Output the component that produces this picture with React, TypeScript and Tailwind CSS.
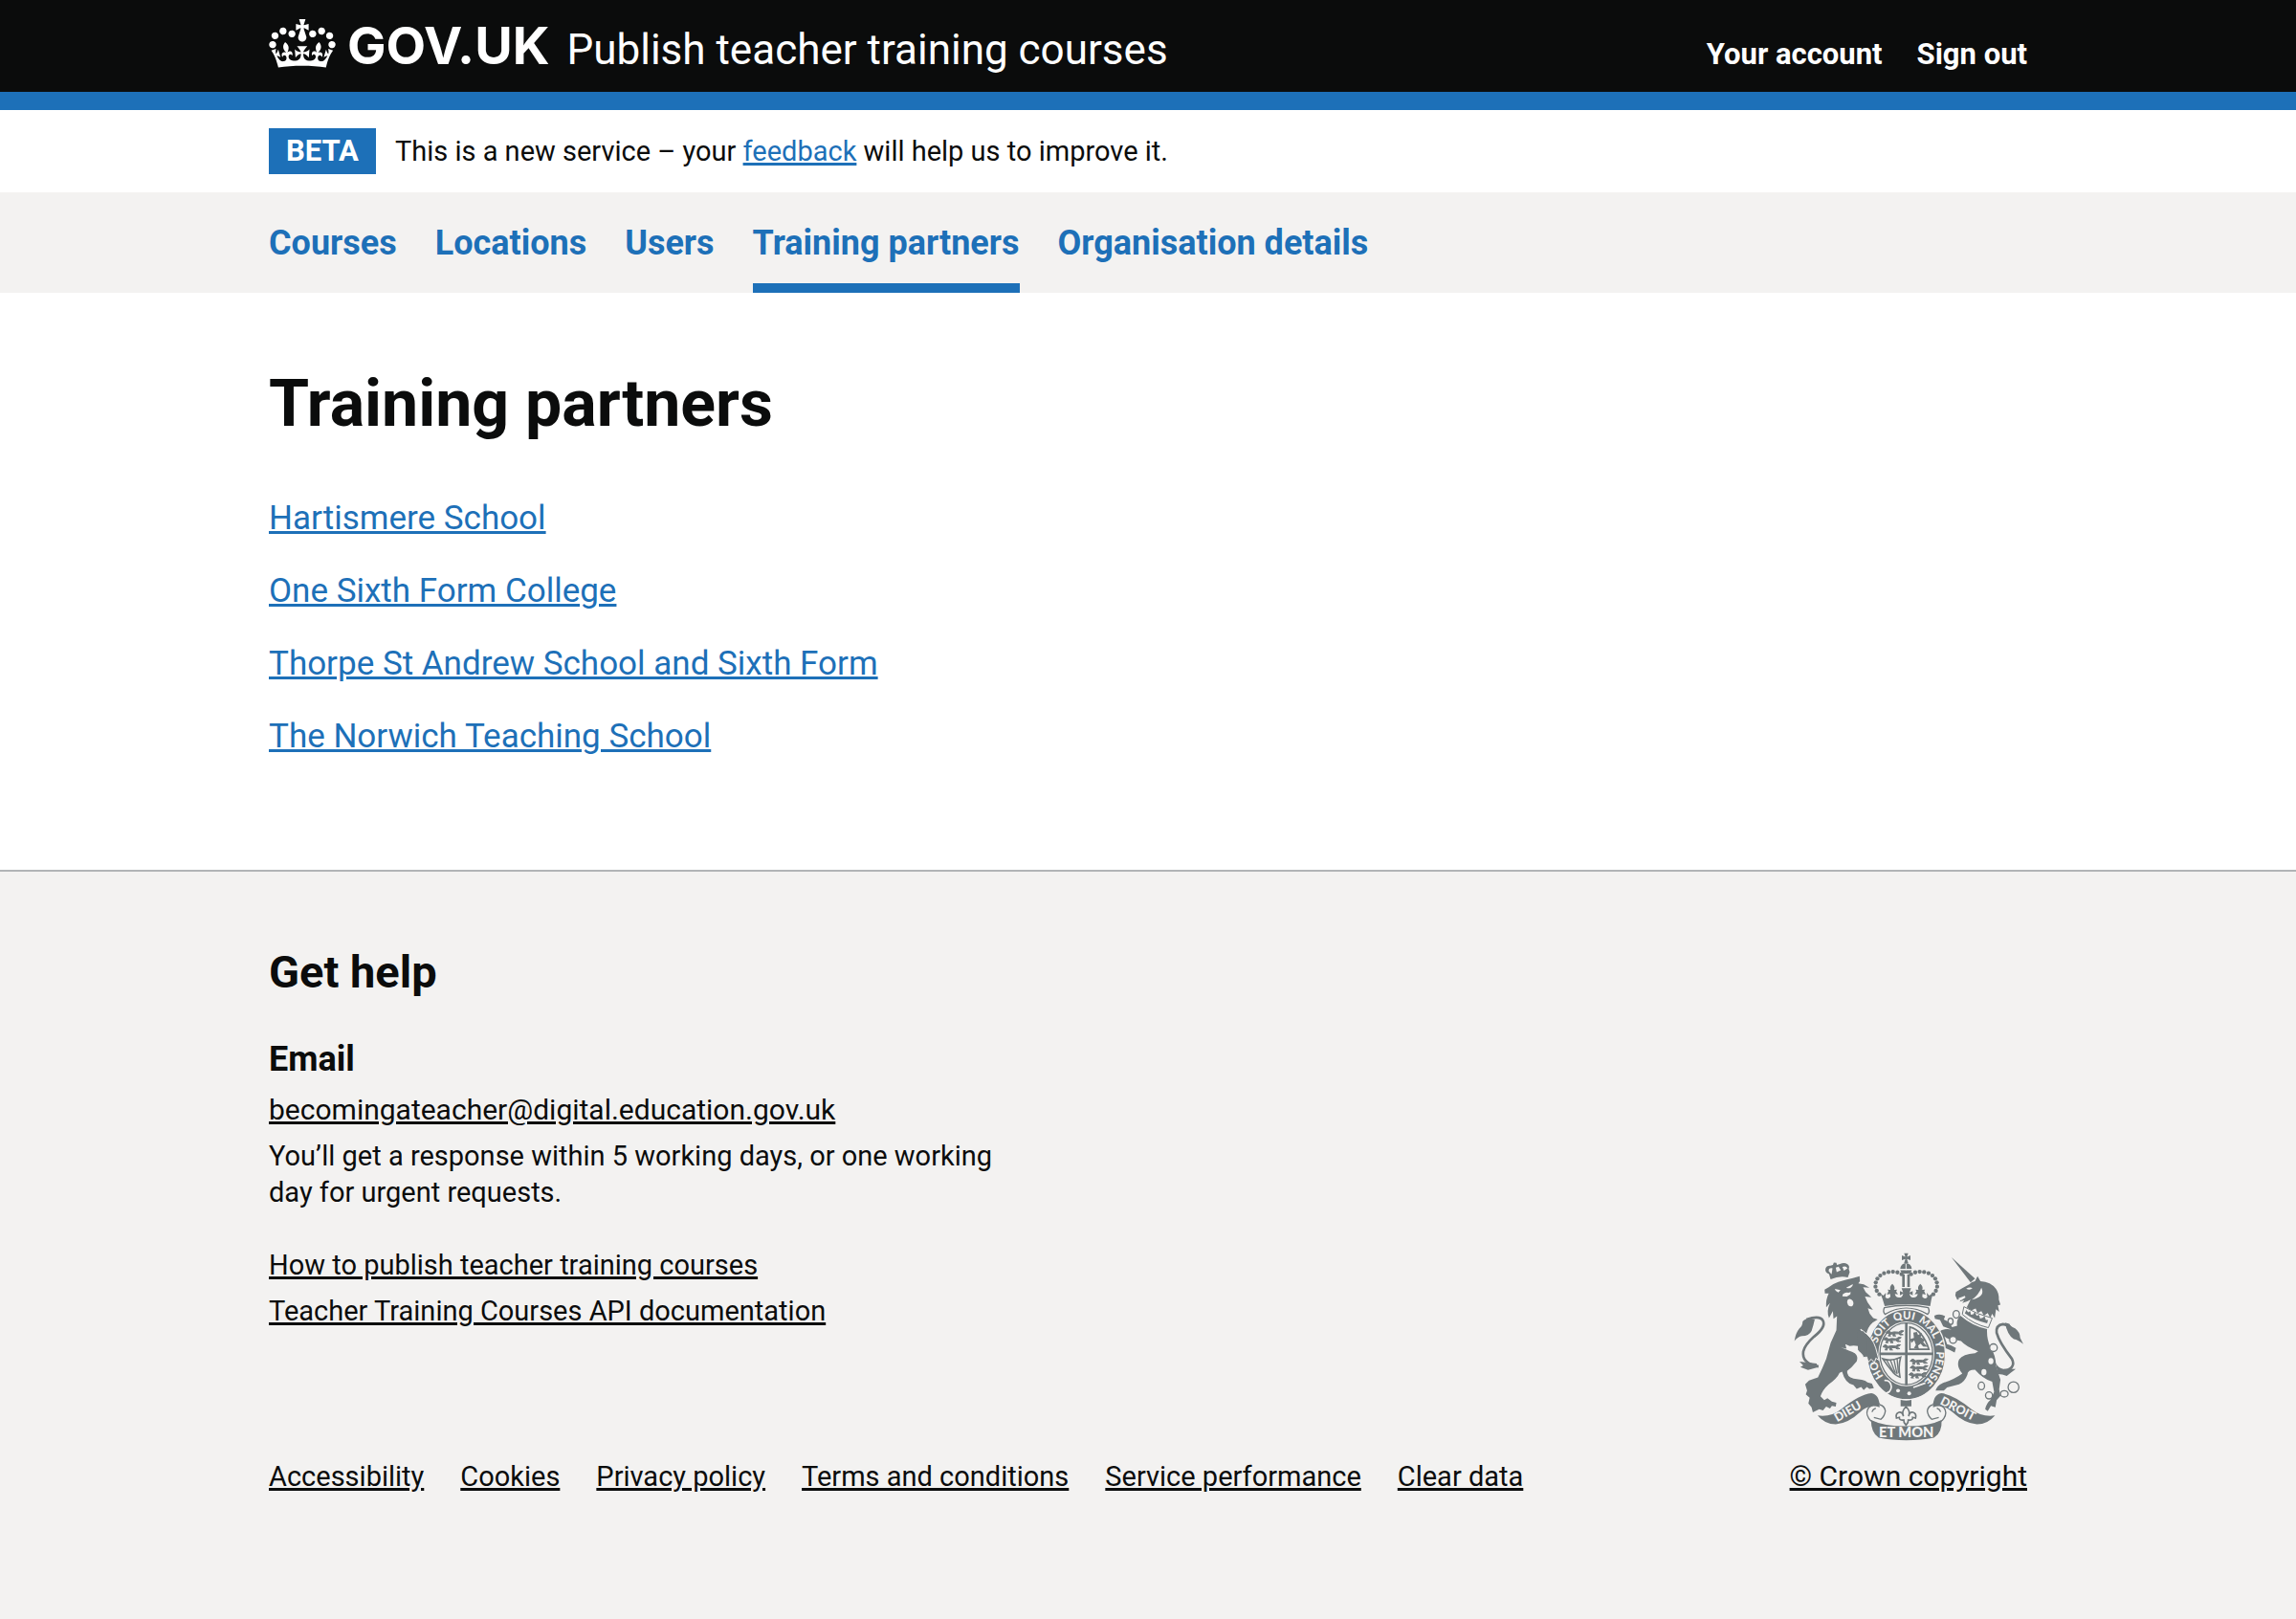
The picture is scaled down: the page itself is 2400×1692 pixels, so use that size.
import type { ReactNode } from "react";

const navItems = [
  { label: "Courses", current: false },
  { label: "Locations", current: false },
  { label: "Users", current: false },
  { label: "Training partners", current: true },
  { label: "Organisation details", current: false },
];

const partners = [
  "Hartismere School",
  "One Sixth Form College",
  "Thorpe St Andrew School and Sixth Form",
  "The Norwich Teaching School",
];

const footerLinks = [
  "Accessibility",
  "Cookies",
  "Privacy policy",
  "Terms and conditions",
  "Service performance",
  "Clear data",
];

function Container({ className = "", children }: { className?: string; children: ReactNode }) {
  return <div className={`mx-auto w-full max-w-[1838px] ${className}`}>{children}</div>;
}

function CrownLogo() {
  return (
    <svg viewBox="0 0 132 97" className="h-[51px] w-[70px] shrink-0" fill="currentColor" aria-hidden="true">
      <path d="M25 30.2c3.5 1.5 7.7-.2 9.1-3.7 1.5-3.6-.2-7.8-3.9-9.2-3.6-1.4-7.6.3-9.1 3.9-1.4 3.5.3 7.5 3.9 9zM9 39.5c3.6 1.5 7.8-.2 9.2-3.7 1.5-3.6-.2-7.8-3.9-9.1-3.6-1.5-7.6.2-9.1 3.8-1.4 3.5.3 7.5 3.8 9zM4.4 57.2c3.5 1.5 7.7-.2 9.1-3.8 1.5-3.6-.2-7.7-3.9-9.1-3.5-1.5-7.6.3-9.1 3.8-1.4 3.5.3 7.6 3.9 9.1zm38.3-21.4c3.5 1.5 7.7-.2 9.1-3.8 1.5-3.6-.2-7.7-3.9-9.1-3.6-1.5-7.6.3-9.1 3.8-1.3 3.6.4 7.7 3.9 9.1zm64.4-5.6c-3.6 1.5-7.8-.2-9.1-3.7-1.5-3.6.2-7.8 3.8-9.2 3.6-1.4 7.7.3 9.2 3.9 1.3 3.5-.4 7.5-3.9 9zm15.9 9.3c-3.6 1.5-7.7-.2-9.1-3.7-1.5-3.6.2-7.8 3.7-9.1 3.6-1.5 7.7.2 9.2 3.8 1.5 3.5-.3 7.5-3.8 9zm4.7 17.7c-3.6 1.5-7.8-.2-9.2-3.8-1.5-3.6.2-7.7 3.9-9.1 3.6-1.5 7.7.3 9.2 3.8 1.3 3.5-.4 7.6-3.9 9.1zM89.3 35.8c-3.6 1.5-7.8-.2-9.2-3.8-1.4-3.6.2-7.7 3.9-9.1 3.6-1.5 7.7.3 9.2 3.8 1.4 3.6-.3 7.7-3.9 9.1zM69.7 17.7l8.9 4.7V9.3l-8.9 2.8c-.2-.3-.5-.6-.9-.9L72.4 0H59.6l3.5 11.2c-.3.3-.6.5-.9.9l-8.8-2.8v13.1l8.8-4.7c.3.3.6.7.9.9l-5 15.4v.1c-.2.8-.4 1.6-.4 2.4 0 4.1 3.1 7.5 7 8.1h.2c.3 0 .7.1 1 .1.4 0 .7 0 1-.1h.2c4-.6 7.1-4.1 7.1-8.1 0-.8-.1-1.7-.4-2.4V34l-5.1-15.4c.4-.2.7-.6 1-.9zM66 92.8c16.9 0 32.8 1.1 47.1 3.2 4-16.9 8.9-26.7 14-33.5l-9.6-3.4c1 4.9 1.1 7.2 0 10.2-1.5-1.4-3-4.3-4.2-8.7L108.6 76c2.8-2 5-3.2 7.5-3.3-4.4 9.4-10 11.9-13.6 11.2-4.3-.8-6.3-4.6-5.6-7.9 1-4.7 5.7-5.9 8-.5 4.3-8.7-3-11.4-7.6-8.8 7.1-7.2 7.9-13.5 2.1-21.1-8 6.1-8.1 12.3-4.5 20.8-4.7-5.4-12.1-2.5-9.5 6.2 3.4-5.2 7.9-2 7.2 3.1-.6 4.3-6.4 7.8-13.5 7.2-10.3-.9-10.9-8-11.2-13.8 2.5-.5 7.1 1.8 11 7.3L80.2 60c-4.1 4.4-8 5.3-12.3 5.4 1.4-4.4 8-11.6 8-11.6H55.5s6.4 7.2 7.9 11.6c-4.2-.1-8-1-12.3-5.4l1.4 16.4c3.9-5.5 8.5-7.7 10.9-7.3-.3 5.8-.9 12.8-11.1 13.8-7.2.6-12.9-2.9-13.5-7.2-.7-5 3.8-8.3 7.1-3.1 2.7-8.7-4.6-11.6-9.4-6.2 3.7-8.5 3.6-14.7-4.6-20.8-5.8 7.6-5 13.9 2.2 21.1-4.7-2.6-11.9.1-7.7 8.8 2.3-5.5 7.1-4.2 8.1.5.7 3.3-1.3 7.1-5.7 7.9-3.5.7-9-1.8-13.5-11.2 2.5.1 4.7 1.3 7.5 3.3l-4.7-15.4c-1.2 4.4-2.7 7.2-4.3 8.7-1.1-3-.9-5.3 0-10.2l-9.5 3.4c5 6.9 9.9 16.7 14 33.5 14.8-2.1 30.8-3.2 47.1-3.2z" />
    </svg>
  );
}

// Beads along the two arches of the royal crown.
const beads: [number, number][] = [
  [409, 124], [396, 118], [382, 116], [368, 117], [354, 121], [342, 128], [333, 138], [328, 150],
  [327, 163], [331, 176], [339, 187],
];

// One passant lion of the quartered field, drawn in a 60 by 18 box.
const passant =
  "M2 9l6-6 6 1 4 4 10-2 14 1 8-5 8 1-3 3-8 3 4 4 5 2-9 1-6-4-10 0-2 4 4 3-9 0 1-6-6 0-5 4 3 2-8 0 4-7z";

function RoyalArms() {
  return (
    <svg viewBox="70 56 722 592" className="h-[197px] w-60" fill="#6f777a" aria-hidden="true">
      {/* Orb, cross and crown */}
      <path d="M417 58h13l-4 11 11-4v15l-11-4 4 13h-13l4-13-11 4V65l11 4z" />
      <path d="M405 107a18 18 0 0 1 36 0zM405 111h36q-2 9-12 11h-12q-10-2-12-11z" />
      <path d="M423 91v20" stroke="#f3f2f1" strokeWidth="3" />
      <path d="M411 124h8v40h-8zM427 124h8v40h-8z" />
      {beads.map(([x, y]) => (
        <g key={y * 1000 + x}>
          <circle cx={x} cy={y} r="6.5" />
          <circle cx={848 - x} cy={y} r="6.5" />
        </g>
      ))}
      <path d="M340 183l12 8 8-9-2 14q8 8 16-1l-1-9-10 2 5-11-3-5 9 1q-4-11 6-19 10 8 6 19l9-1-3 6 6 9-10-1q2 14 20 10 5-2 6-11l-10 5v-13l10 4-5-13h30l-5 13 10-4v13l-10-5q1 9 6 11 18 4 20-10l-10 1 6-9-3-6 9 1q-4-11 6-19 10 8 6 19l9-1-3 5 5 11-10-2-1 9q8 9 16 1l-2-14 8 9 12-8q-6 20-9 41-70-12-143 0-6-22-14-41z" />
      <path d="M355 229q69-14 138 0 6 14-2 21-67-38-134 0-8-9-2-21z" fill="#f3f2f1" stroke="#6f777a" strokeWidth="4" />

      {/* Lion supporter */}
      <path d="M186 140l-5-17q-14-5-11-17 3-10 15-9l8-2 3-8 8 1 2 7 9-3q14-6 23 0 9 6 5 15l3 10-6 17q-26-6-54 6z" />
      <path d="M189 124l-9-10q-1-11 12-9zM205 117l-3-14 9-3 7 11zM228 113l-5-12q12-4 16 4z" fill="#f3f2f1" />
      <path d="M167 172L180 165Q192 154 210 148Q235 140 256 136L277 130L278 146L273 153L290 156L308 166L288 165L296 180L314 196L294 194L302 212L319 236L303 231L309 248L320 262L334 266L318 276Q300 292 298 316Q318 330 326 356L336 392L328 388L324 400L316 391L305 398L302 384L290 386L290 370L276 366L272 350Q258 346 246 350L232 344L236 358L218 354Q246 364 262 372Q274 382 268 398Q252 418 238 428Q236 446 258 452L284 456Q296 458 302 464L316 468L322 482L308 484L300 478L290 488L282 478L268 484L258 472Q232 468 222 430L214 434Q206 452 180 470Q160 488 154 508L166 520L176 514L190 524L204 528L202 540L190 538L184 546L172 540L162 552L150 548L130 558L126 542L116 530L120 512L108 502L112 490L106 470L118 458Q134 452 146 448Q160 420 172 390L186 340L204 300L206 256L195 264L193 240L181 262Q172 240 184 214L172 228Q170 204 180 184L168 184Z" />
      <path d="M199 170l18 4-7 7q-9-2-11-11zM235 166l21-11q0 8-7 11-7 3-14 0zM224 187q9-8 18-5l7-2-1 7-11 7-14-1zM239 205q8-7 16 2 6 10-1 17-7 3-13-3-6-8-2-16z" fill="#f3f2f1" />
      <path d="M280 297q28 20 44 50" fill="none" stroke="#f3f2f1" strokeWidth="4" />
      <path d="M148 414q-54-10-48-47 4-20 34-47 38-30 28-50-9-18-52-4" fill="none" stroke="#6f777a" strokeWidth="8" />
      <path d="M136 266Q110 258 98 272Q98 286 88 294Q76 308 72 334Q82 320 96 318Q118 318 126 302Q132 284 136 266zM142 405l-26-3-28-3 12 12-9 5 24 9 30-8z" />

      {/* Unicorn supporter */}
      <path d="M566 71L640 138L626 150Z" />
      <path d="M622 156L630 149L640 146L648 130L657 146Q690 148 706 170Q716 184 715 204L720 220L712 222L716 242L706 234L702 262L694 248L688 262L680 246L668 254L660 240L648 246L642 232L628 238L614 228L626 204Q614 212 600 214L606 206L592 210L596 202L584 204L578 190L580 180L600 168Z" />
      <path d="M612 169q12-6 20-1-8 8-20 1zM586 200l22-8 2 5-14 9zM660 166q14 28-30 38 22-16 30-38z" fill="#f3f2f1" />
      <path d="M594 254Q634 288 678 296Q676 326 688 352Q706 380 706 412L720 456L716 486L720 506L708 520L704 542L690 538L680 554L672 548Q676 530 688 520L700 494L694 462Q664 452 640 424Q616 424 616 440Q608 462 590 470L552 480L542 490L516 490Q520 474 538 466Q572 456 600 436Q580 412 590 392Q602 374 640 372L650 366Q612 352 596 334L578 330Q558 332 544 320L552 344L566 348L580 356L576 370L560 362L546 356L540 338L524 306Q544 292 566 298L540 288L530 268L514 264L512 254Q530 246 546 256L542 266Q562 274 568 290L584 286Q580 268 594 254Z" />
      <path d="M605 226Q650 252 694 262L682 292Q636 282 600 250Z" fill="#f3f2f1" stroke="#6f777a" strokeWidth="3" />
      <path d="M608 247l5-11 5 8 7-4 2 11 8-1 4-8 6 12 8-2 3 11 8-2 6-5 4 12 7 0-3 10q-40-8-70-31z" />
      <path d="M722 430q50-8 34-40-40-52-48-82-3-24 20-27 28 2 38 38" fill="none" stroke="#6f777a" strokeWidth="8" />
      <path d="M734 276L748 280Q752 290 766 294Q782 306 782 324L792 344Q776 330 762 328Q742 316 734 276zM704 402q13 23 30 19l34 1-16 12-12 10-14-5-14-1z" />
      <g fill="none" stroke="#6f777a" strokeWidth="4">
        <circle cx="761" cy="479" r="17" />
        <ellipse cx="732" cy="500" rx="12" ry="10" />
        <circle cx="684" cy="505" r="11" fill="#f3f2f1" />
        <ellipse cx="660" cy="475" rx="10" ry="12" />
        <ellipse cx="581" cy="250" rx="10" ry="12" />
        <ellipse cx="563" cy="272" rx="8" ry="10" />
      </g>
      <g fill="#f3f2f1">
        <ellipse cx="668" cy="432" rx="8" ry="10" />
        <ellipse cx="690" cy="397" rx="8" ry="10" />
        <circle cx="698" cy="355" r="12" stroke="#6f777a" strokeWidth="4" />
        <circle cx="571" cy="330" r="11" stroke="#6f777a" strokeWidth="4" />
      </g>

      {/* Garter */}
      <ellipse cx="424" cy="376" rx="123" ry="142" stroke="#f3f2f1" strokeWidth="4" />
      <ellipse cx="424" cy="374" rx="88" ry="102" fill="#f3f2f1" />
      <ellipse cx="424" cy="374" rx="83" ry="97" fill="#f3f2f1" stroke="#6f777a" strokeWidth="4" />
      <path id="garter" d="M424 482A95 109 0 0 1 329 374A95 109 0 0 1 424 265A95 109 0 0 1 519 374A95 109 0 0 1 424 482" fill="none" />
      <g fill="#f3f2f1" className="text-[34px] font-black" fontFamily="Lato">
        <text><textPath href="#garter" startOffset="13%">HO</textPath></text>
        <text><textPath href="#garter" startOffset="30%">SOIT</textPath></text>
        <text><textPath href="#garter" startOffset="44%">QUI</textPath></text>
        <text><textPath href="#garter" startOffset="56%">MAL</textPath></text>
        <text><textPath href="#garter" startOffset="69%">Y</textPath></text>
        <text><textPath href="#garter" startOffset="74%">PENSE</textPath></text>
      </g>
      <path d="M355 458q20-2 22 20-2 18-18 20M446 480l38-14" fill="none" stroke="#f3f2f1" strokeWidth="5" />
      <circle cx="398" cy="490" r="6" fill="#f3f2f1" />
      <circle cx="433" cy="499" r="6" fill="#f3f2f1" />
      <path d="M284 300Q318 322 328 356L338 394L328 388L324 402L314 391L304 400L300 384L288 386L284 366Z" stroke="#f3f2f1" strokeWidth="3" />
      <path d="M270 300L290 304L300 330L300 382L288 378L272 362Z" />

      {/* Quartered shield */}
      <path d="M420 276h8v196h-8zM340 370h168v8H340z" />
      {[
        [358, 299], [350, 320], [348, 343],
        [434, 388], [434, 409], [430, 431],
      ].map(([x, y]) => (
        <path key={`${x}-${y}`} d={passant} transform={`translate(${x} ${y})`} stroke="#6f777a" strokeWidth="3" />
      ))}
      <path d="M435 290q40 9 60 70h-60z" fill="none" stroke="#6f777a" strokeWidth="5" />
      <path d="M446 308l11-3 4 10 12-7-4 14 14 8-6 8 14 14-14-1-8-9-8 6 3 12-16-4 6-10-5-14-9 8-4-12 12-4z" />
      <path d="M350 390q26 9 56-5-8 30-2 62-16-4-26-20-14-16-28-37z" fill="none" stroke="#6f777a" strokeWidth="5" />
      <path d="M362 394l22 38M374 394l16 42M385 392l10 46M395 390l4 44" fill="none" stroke="#6f777a" strokeWidth="4" />

      {/* Fleur-de-lis and motto ribbon */}
      <path d="M406 519q18 4 34 0v20h-34z" />
      <path
        d="M423 540q-16 16-8 30-4-14-14-12-12 4-8 18l9-2q-1 10 14 8l1 8 6 8 6-8 1-8q15 2 14-8l9 2q4-14-8-18-10-2-14 12 8-14-8-30z"
        fill="#f3f2f1"
        stroke="#6f777a"
        strokeWidth="5"
      />
      {[undefined, "translate(848 0) scale(-1 1)"].map((t) => (
        <g key={t ?? "left"} transform={t}>
          <path d="M145 568q42 6 74-20 58-46 95-50 26 4 26 44-34-12-62 16-36 34-76 38-34 0-57-28z" />
          <path
            d="M340 531q-20 0-34 12-12 16 0 34 8 12 26 16M340 534q16 4 18 20-2 16-14 26l-22-6M328 545q-10 4-12 12"
            fill="none"
            stroke="#6f777a"
            strokeWidth="4"
          />
        </g>
      ))}
      <path d="M313 582q40 20 111 20t111-20q2 40-24 56-40 8-87 8t-87-8q-24-16-24-56z" />
      <g fill="#f3f2f1" className="font-black" fontFamily="Lato">
        <text x="424" y="636" textAnchor="middle" className="text-[44px]">ET MON</text>
        <text transform="translate(207 589) rotate(-30)" className="text-[38px]">DIEU</text>
        <text transform="translate(528 531) rotate(27)" className="text-[38px]">DROIT</text>
      </g>
    </svg>
  );
}

const plainLink = "underline decoration-[3px] underline-offset-2";

export default function App() {
  return (
    <div className="flex min-h-screen flex-col bg-white font-['Roboto',sans-serif] text-[#0b0c0c]">
      <header className="border-b-[19px] border-[#1d70b8] bg-[#0b0c0c] text-white">
        <Container className="flex h-24 items-baseline pt-5">
          <a href="#" aria-label="GOV.UK" className="flex gap-3">
            <CrownLogo />
            <span className="self-baseline font-['Inter',sans-serif] text-[54px] leading-[56px] font-bold">GOV.UK</span>
          </a>
          <a href="#" className="ml-[18px] text-[44px] leading-[56px]">
            Publish teacher training courses
          </a>
          <nav aria-label="Account" className="ml-auto flex gap-9 text-[31px] leading-[38px] font-bold">
            <a href="#">Your account</a>
            <a href="#">Sign out</a>
          </nav>
        </Container>
      </header>

      <Container className="flex items-baseline gap-5 py-[19px]">
        <strong className="bg-[#1d70b8] px-[18px] text-[31px] leading-[48px] font-bold text-white">BETA</strong>
        <p className="text-[29px] leading-[38px]">
          This is a new service – your{" "}
          <a href="#" className={`${plainLink} text-[#1d70b8]`}>
            feedback
          </a>{" "}
          will help us to improve it.
        </p>
      </Container>

      <nav aria-label="Primary" className="bg-[#f3f2f1]">
        <Container>
          <ul className="flex gap-10 text-[36px] leading-[48px] font-bold text-[#1d70b8]">
            {navItems.map(({ label, current }) => (
              <li key={label}>
                <a
                  href="#"
                  aria-current={current ? "page" : undefined}
                  className={`block border-b-10 pt-[29px] pb-[18px] ${current ? "border-[#1d70b8]" : "border-transparent"}`}
                >
                  {label}
                </a>
              </li>
            ))}
          </ul>
        </Container>
      </nav>

      <main>
        <Container className="pt-[68px] pb-[115px]">
          <h1 className="mb-12 text-[68px] leading-[96px] font-bold">Training partners</h1>
          <ul className="flex flex-col gap-7 text-[35px] leading-[48px] text-[#1d70b8]">
            {partners.map((name) => (
              <li key={name}>
                <a href="#" className={plainLink}>
                  {name}
                </a>
              </li>
            ))}
          </ul>
        </Container>
      </main>

      <footer className="grow border-t-2 border-[#b1b4b6] bg-[#f3f2f1] text-[29px] leading-[38px]">
        <Container className="flex items-end justify-between pt-[76px] pb-24">
          <div>
            <h2 className="mb-[38px] text-[47px] leading-[58px] font-bold">Get help</h2>
            <h3 className="mb-2.5 text-[36px] leading-[48px] font-bold">Email</h3>
            <ul className="mb-[38px] flex max-w-[800px] flex-col gap-2.5">
              <li>
                <a href="#" className={`${plainLink} text-[30px]`}>
                  becomingateacher@digital.education.gov.uk
                </a>
              </li>
              <li>You’ll get a response within 5 working days, or one working day for urgent requests.</li>
            </ul>
            <ul className="mb-[135px] flex flex-col gap-2.5">
              <li>
                <a href="#" className={plainLink}>
                  How to publish teacher training courses
                </a>
              </li>
              <li>
                <a href="#" className={plainLink}>
                  Teacher Training Courses API documentation
                </a>
              </li>
            </ul>
            <ul className="flex flex-wrap gap-x-[38px]">
              {footerLinks.map((label) => (
                <li key={label}>
                  <a href="#" className={plainLink}>
                    {label}
                  </a>
                </li>
              ))}
            </ul>
          </div>
          <a href="#" className={`flex flex-col items-center gap-[18px] text-[30px] ${plainLink}`}>
            <RoyalArms />
            <span>© Crown copyright</span>
          </a>
        </Container>
      </footer>
    </div>
  );
}
